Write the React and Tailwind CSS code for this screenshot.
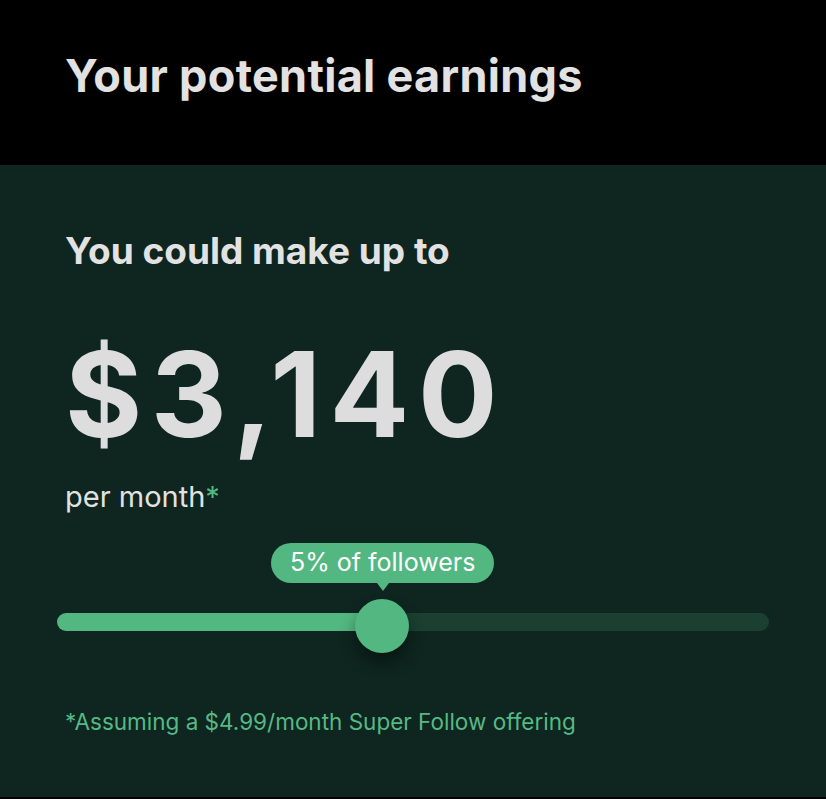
export default function App() {
  return (
    <div className="w-[826px] h-[799px] bg-black overflow-hidden flex flex-col" style={{ fontFamily: 'Inter, "Liberation Sans", sans-serif' }}>
      <header className="h-[165px] px-[65px] pt-[50px] shrink-0">
        <h1 className="text-[45px] font-bold leading-[52px] text-[#e2e2e2] tracking-[0.3px]">Your potential earnings</h1>
      </header>

      <section className="h-[632px] bg-[#0e261f] px-[65px] pt-[64px] flex flex-col">
        <h2 className="text-[37px] font-bold leading-[44px] text-[#e2e2e2]">You could make up to</h2>
        <div className="mt-[62px] text-[118px] font-bold leading-[118px] text-[#dddddd] tracking-[8.5px]">$3,140</div>
        <div className="mt-[26px] text-[29px] leading-[36px] text-[#e2e2e2]">
          per month<span className="text-[#53b882]">*</span>
        </div>

        <div className="relative mt-[28px] -mx-[8px] h-[110px] pt-[70px]">
          <div className="flex h-[18px] rounded-full overflow-hidden">
            <div className="w-[325px] bg-[#52b781]" />
            <div className="flex-1 bg-[#1b3f31]" />
          </div>
          <div className="absolute left-[214px] top-0 flex flex-col items-center">
            <div className="h-[40px] px-[19px] rounded-[20px] bg-[#52b781] flex items-center text-[25px] text-white whitespace-nowrap">
              5% of followers
            </div>
            <div className="w-0 h-0 border-l-[6px] border-r-[6px] border-t-[8px] border-l-transparent border-r-transparent border-t-[#52b781]" />
          </div>
          <div className="absolute left-[298px] top-[56px] w-[54px] h-[54px] rounded-full bg-[#52b781] shadow-[0_10px_16px_rgba(0,0,0,0.4)]" />
        </div>

        <p className="mt-[54px] text-[22.5px] leading-[30px] text-[#56b985]">*Assuming a $4.99/month Super Follow offering</p>
      </section>
    </div>
  )
}
